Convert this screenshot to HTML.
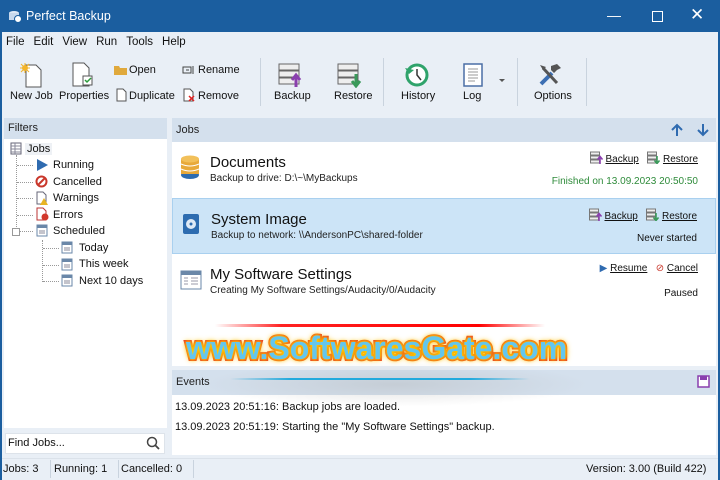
<!DOCTYPE html>
<html><head><meta charset="utf-8"><style>
*{margin:0;padding:0;box-sizing:border-box}
body{width:720px;height:480px;overflow:hidden;font-family:"Liberation Sans",sans-serif;font-size:11px;color:#111;background:#e9eff6;position:relative}
.abs{position:absolute}
#title{left:0;top:0;width:720px;height:32px;background:#1b5e9f;color:#fff;font-size:12px}
#menu{left:0;top:32px;width:720px;height:20px;background:#e9eff6}
#menu span{margin-left:6px;margin-right:3px;font-size:11.5px;line-height:20px}
.tb{text-align:center;font-size:11px}
.sep{width:1px;background:#c9d3de}
.hdr{background:#d4e0ed;font-size:11px;color:#222}
.u{text-decoration:underline}
.row{left:172px;width:544px;height:56px;background:#fff}
.row .t{position:absolute;left:38px;top:12px;font-size:15px;color:#111}
.row .s{position:absolute;left:38px;top:31px;font-size:10px;color:#222}
.row .r{position:absolute;right:18px;top:34px;font-size:10px}
.row .a{position:absolute;right:18px;top:9px;font-size:10px}
.tree div{position:absolute;font-size:11px}
.ic{display:inline-block;vertical-align:-2px}
</style></head><body>
<svg width="0" height="0" style="position:absolute"><defs>
<symbol id="bk" viewBox="0 0 13 13"><rect x="0.5" y="1" width="9" height="3" fill="#eee" stroke="#777"/><rect x="0.5" y="5" width="9" height="3" fill="#eee" stroke="#777"/><rect x="0.5" y="9" width="9" height="3" fill="#eee" stroke="#777"/><path d="M10 13V6M7.5 8.5L10 5.5l2.5 3" stroke="#8a3fae" stroke-width="1.6" fill="none"/></symbol>
<symbol id="rs" viewBox="0 0 13 13"><rect x="0.5" y="1" width="9" height="3" fill="#eee" stroke="#777"/><rect x="0.5" y="5" width="9" height="3" fill="#eee" stroke="#777"/><rect x="0.5" y="9" width="9" height="3" fill="#eee" stroke="#777"/><path d="M10 5v7M7.5 9.5l2.5 3 2.5-3" stroke="#3a9a5a" stroke-width="1.6" fill="none"/></symbol>
</defs></svg>
<div id="title" class="abs">
 <svg class="abs" style="left:8px;top:10px" width="14" height="13"><ellipse cx="6" cy="3" rx="5" ry="2" fill="#dfe9f5"/><rect x="1" y="3" width="10" height="7" fill="#c7d8ec"/><circle cx="10" cy="9" r="3.5" fill="#fff" stroke="#1b5e9f"/></svg>
 <div class="abs" style="left:26px;top:9px;font-size:12.5px">Perfect Backup</div>
 <div class="abs" style="left:607px;top:7px;font-size:14px">&#8212;</div>
 <div class="abs" style="left:652px;top:11px;width:11px;height:11px;border:1.3px solid #fff"></div>
 <div class="abs" style="left:690px;top:5px;font-size:17px">&#10005;</div>
</div>
<div id="menu" class="abs"><span>File</span><span>Edit</span><span>View</span><span>Run</span><span>Tools</span><span>Help</span></div>
<!-- toolbar -->
<svg class="abs" style="left:18px;top:62px" width="26" height="26"><path d="M8 3h10l5 5v17H8z" fill="#fff" stroke="#555"/><circle cx="7" cy="6" r="3" fill="#f3b42a"/><path d="M2 6h10M7 1v10M3 2l8 8M11 2l-8 8" stroke="#f3b42a" stroke-width="1"/></svg>
<div class="abs tb" style="left:10px;top:90px">New Job</div>
<svg class="abs" style="left:70px;top:62px" width="26" height="26"><path d="M3 1h11l5 5v18H3z" fill="#fff" stroke="#555"/><rect x="13" y="14" width="9" height="9" fill="#fff" stroke="#555"/><path d="M15 18l2 2 4-4" stroke="#2a9a3a" stroke-width="1.5" fill="none"/></svg>
<div class="abs tb" style="left:59px;top:90px">Properties</div>
<svg class="abs" style="left:114px;top:64px" width="14" height="12"><path d="M0 2h5l1 2h7v7H0z" fill="#e0a93c"/></svg>
<div class="abs" style="left:129px;top:64px">Open</div>
<svg class="abs" style="left:114px;top:88px" width="14" height="14"><path d="M3 1h6l3 3v9H3z" fill="#fff" stroke="#555"/></svg>
<div class="abs" style="left:129px;top:90px">Duplicate</div>
<svg class="abs" style="left:182px;top:65px" width="14" height="10"><rect x="1" y="2" width="8" height="6" fill="none" stroke="#444"/><path d="M4 5h3M11 1v8" stroke="#444"/></svg>
<div class="abs" style="left:198px;top:64px">Rename</div>
<svg class="abs" style="left:182px;top:88px" width="14" height="14"><path d="M2 1h6l3 3v9H2z" fill="#fff" stroke="#555"/><path d="M7 8l5 5M12 8l-5 5" stroke="#d22" stroke-width="1.5"/></svg>
<div class="abs" style="left:198px;top:90px">Remove</div>
<div class="abs sep" style="left:260px;top:58px;height:48px"></div>
<svg class="abs" style="left:277px;top:62px" width="26" height="26"><rect x="2" y="2" width="20" height="6" fill="#eee" stroke="#666"/><rect x="2" y="9" width="20" height="6" fill="#eee" stroke="#666"/><rect x="2" y="16" width="20" height="6" fill="#eee" stroke="#666"/><path d="M19 25V14M15 18l4-5 4 5" stroke="#8a3fae" stroke-width="3" fill="none"/></svg>
<div class="abs tb" style="left:274px;top:90px">Backup</div>
<svg class="abs" style="left:336px;top:62px" width="26" height="26"><rect x="2" y="2" width="20" height="6" fill="#eee" stroke="#666"/><rect x="2" y="9" width="20" height="6" fill="#eee" stroke="#666"/><rect x="2" y="16" width="20" height="6" fill="#eee" stroke="#666"/><path d="M20 12v11M16 19l4 5 4-5" stroke="#3a9a5a" stroke-width="3" fill="none"/></svg>
<div class="abs tb" style="left:334px;top:90px">Restore</div>
<div class="abs sep" style="left:383px;top:58px;height:48px"></div>
<svg class="abs" style="left:404px;top:62px" width="26" height="26"><circle cx="13" cy="13" r="10" fill="#fff" stroke="#2fa36b" stroke-width="3"/><path d="M13 7v6l4 5" stroke="#333" stroke-width="1.5" fill="none"/><path d="M1 6l4 6 5-4z" fill="#2fa36b"/></svg>
<div class="abs tb" style="left:401px;top:90px">History</div>
<svg class="abs" style="left:462px;top:62px" width="22" height="26"><rect x="2" y="2" width="18" height="22" fill="#fff" stroke="#4a6fa5" stroke-width="1.5"/><path d="M6 7h10M6 10h10M6 13h10M6 16h10M6 19h7" stroke="#999"/></svg>
<div class="abs tb" style="left:463px;top:90px">Log</div>
<div class="abs" style="left:499px;top:79px;width:0;height:0;border-left:3px solid transparent;border-right:3px solid transparent;border-top:3px solid #555"></div>
<div class="abs sep" style="left:517px;top:58px;height:48px"></div>
<svg class="abs" style="left:537px;top:62px" width="26" height="26"><path d="M4 22L15 11" stroke="#3c6fb3" stroke-width="4"/><path d="M6 6l14 15" stroke="#555" stroke-width="3"/><path d="M3 3l6 2-3 3zM14 4l6-2 4 4-4 2-3 3-3-3z" fill="#555"/></svg>
<div class="abs tb" style="left:534px;top:90px">Options</div>
<div class="abs sep" style="left:586px;top:58px;height:48px"></div>
<!-- left panel -->
<div class="abs hdr" style="left:4px;top:118px;width:163px;height:21px;padding:4px 0 0 4px">Filters</div>
<div class="abs" style="left:4px;top:139px;width:163px;height:289px;background:#fff"></div>
<div class="tree">
 <svg class="abs" style="left:10px;top:142px" width="12" height="13"><rect x="1" y="1" width="10" height="11" fill="#fff" stroke="#667"/><path d="M1 4h10M1 7h10M1 10h10M5 1v11" stroke="#889"/></svg>
 <div style="left:25px;top:143px;background:#eef1f5;padding:0 2px">Jobs</div>
 <div class="abs" style="left:16px;top:155px;width:1px;height:78px;border-left:1px dotted #999"></div>
 <div class="abs" style="left:17px;top:165px;width:16px;border-top:1px dotted #999"></div>
 <div class="abs" style="left:17px;top:182px;width:16px;border-top:1px dotted #999"></div>
 <div class="abs" style="left:17px;top:198px;width:16px;border-top:1px dotted #999"></div>
 <div class="abs" style="left:17px;top:215px;width:16px;border-top:1px dotted #999"></div>
 <div class="abs" style="left:20px;top:231px;width:13px;border-top:1px dotted #999"></div>
 <div class="abs" style="left:12px;top:228px;width:8px;height:8px;border:1px solid #999;background:#fff"></div>
 <div class="abs" style="left:42px;top:240px;width:1px;height:42px;border-left:1px dotted #999"></div>
 <div class="abs" style="left:43px;top:248px;width:16px;border-top:1px dotted #999"></div>
 <div class="abs" style="left:43px;top:265px;width:16px;border-top:1px dotted #999"></div>
 <div class="abs" style="left:43px;top:281px;width:16px;border-top:1px dotted #999"></div>
 <svg class="abs" style="left:36px;top:159px" width="12" height="12"><path d="M1 0l11 6-11 6z" fill="#2f6bb0"/></svg>
 <div style="left:53px;top:159px">Running</div>
 <svg class="abs" style="left:35px;top:175px" width="13" height="13"><circle cx="6.5" cy="6.5" r="5" fill="none" stroke="#c9372b" stroke-width="2"/><path d="M3 10l7-7" stroke="#c9372b" stroke-width="2"/></svg>
 <div style="left:53px;top:176px">Cancelled</div>
 <svg class="abs" style="left:36px;top:191px" width="13" height="14"><path d="M1 1h6l3 3v9H1z" fill="#fff" stroke="#667"/><path d="M8 7l4 7H4z" fill="#e8b423"/></svg>
 <div style="left:53px;top:192px">Warnings</div>
 <svg class="abs" style="left:36px;top:207px" width="13" height="14"><path d="M1 1h6l3 3v9H1z" fill="#fff" stroke="#b33"/><circle cx="9" cy="10" r="3.5" fill="#d2372b"/></svg>
 <div style="left:53px;top:209px">Errors</div>
 <svg class="abs" style="left:36px;top:224px" width="12" height="13"><rect x="1" y="1" width="10" height="11" fill="#fff" stroke="#6a87a8"/><rect x="1" y="1" width="10" height="3" fill="#6a87a8"/><path d="M3 7h6M3 9h6" stroke="#889"/></svg>
 <div style="left:53px;top:225px">Scheduled</div>
 <svg class="abs" style="left:61px;top:241px" width="12" height="13"><rect x="1" y="1" width="10" height="11" fill="#fff" stroke="#6a87a8"/><rect x="1" y="1" width="10" height="3" fill="#6a87a8"/><path d="M3 7h6M3 9h6" stroke="#889"/></svg>
 <div style="left:79px;top:242px">Today</div>
 <svg class="abs" style="left:61px;top:258px" width="12" height="13"><rect x="1" y="1" width="10" height="11" fill="#fff" stroke="#6a87a8"/><rect x="1" y="1" width="10" height="3" fill="#6a87a8"/><path d="M3 7h6M3 9h6" stroke="#889"/></svg>
 <div style="left:79px;top:258px">This week</div>
 <svg class="abs" style="left:61px;top:274px" width="12" height="13"><rect x="1" y="1" width="10" height="11" fill="#fff" stroke="#6a87a8"/><rect x="1" y="1" width="10" height="3" fill="#6a87a8"/><path d="M3 7h6M3 9h6" stroke="#889"/></svg>
 <div style="left:79px;top:275px">Next 10 days</div>
</div>
<div class="abs" style="left:5px;top:433px;width:160px;height:21px;background:#fff;border:1px solid #dde3ea;padding:3px 0 0 2px">Find Jobs...</div>
<svg class="abs" style="left:146px;top:436px" width="14" height="14"><circle cx="6" cy="6" r="4.5" fill="none" stroke="#444" stroke-width="1.5"/><path d="M9 9l4 4" stroke="#444" stroke-width="1.8"/></svg>
<!-- right panel -->
<div class="abs hdr" style="left:172px;top:118px;width:544px;height:24px;padding:6px 0 0 4px">Jobs</div>
<svg class="abs" style="left:670px;top:123px" width="14" height="14"><path d="M7 13V2M2 7l5-5 5 5" stroke="#2f6bb0" stroke-width="2" fill="none"/></svg>
<svg class="abs" style="left:696px;top:123px" width="14" height="14"><path d="M7 1v11M2 7l5 5 5-5" stroke="#2f6bb0" stroke-width="2" fill="none"/></svg>
<div class="abs row" style="top:142px">
 <svg class="abs" style="left:8px;top:13px" width="20" height="26"><ellipse cx="10" cy="20" rx="9" ry="4" fill="#2d6cb0"/><rect x="1" y="4" width="18" height="15" fill="#e8a93a"/><ellipse cx="10" cy="4" rx="9" ry="3.5" fill="#f2c05a"/><path d="M1 9q9 4 18 0M1 14q9 4 18 0" stroke="#fff" fill="none"/></svg>
 <div class="t">Documents</div><div class="s">Backup to drive: D:\~\MyBackups</div>
 <div class="a"><svg class="ic" width="13" height="13"><use href="#bk"/></svg> <span class="u">Backup</span> &nbsp; <svg class="ic" width="13" height="13"><use href="#rs"/></svg> <span class="u">Restore</span></div>
 <div class="r" style="color:#2e8b3a">Finished on 13.09.2023 20:50:50</div>
</div>
<div class="abs row" style="top:198px;background:#cce4f7;border:1px solid #a9d0ef">
 <svg class="abs" style="left:9px;top:14px" width="18" height="22"><rect x="1" y="1" width="16" height="20" rx="2" fill="#2d6cb0"/><circle cx="9" cy="11" r="5" fill="#dfeaf6"/><circle cx="9" cy="11" r="1.5" fill="#2d6cb0"/></svg>
 <div class="t">System Image</div><div class="s">Backup to network: \\AndersonPC\shared-folder</div>
 <div class="a"><svg class="ic" width="13" height="13"><use href="#bk"/></svg> <span class="u">Backup</span> &nbsp; <svg class="ic" width="13" height="13"><use href="#rs"/></svg> <span class="u">Restore</span></div>
 <div class="r">Never started</div>
</div>
<div class="abs row" style="top:254px">
 <svg class="abs" style="left:8px;top:16px" width="22" height="20"><rect x="1" y="1" width="20" height="18" fill="#fff" stroke="#6a87a8"/><rect x="1" y="1" width="20" height="4" fill="#6a87a8"/><path d="M4 8h4M4 11h4M4 14h4M11 8h7M11 11h7M11 14h7" stroke="#99a"/></svg>
 <div class="t">My Software Settings</div><div class="s">Creating My Software Settings/Audacity/0/Audacity</div>
 <div class="a"><span style="color:#2f6bb0">&#9654;</span> <span class="u">Resume</span> &nbsp; <span style="color:#c9372b">&#8856;</span> <span class="u">Cancel</span></div>
 <div class="r">Paused</div>
</div>
<div class="abs" style="left:172px;top:310px;width:544px;height:56px;background:#fff"></div>
<div class="abs hdr" style="left:172px;top:370px;width:544px;height:25px;padding:6px 0 0 4px">Events</div>
<svg class="abs" style="left:697px;top:375px" width="13" height="13"><rect x="1" y="1" width="11" height="11" fill="#fff" stroke="#8a3fae" stroke-width="1.5"/><rect x="3" y="1" width="7" height="4" fill="#8a3fae"/></svg>
<div class="abs" style="left:172px;top:395px;width:544px;height:60px;background:#fff"></div>
<div class="abs" style="left:175px;top:401px">13.09.2023 20:51:16: Backup jobs are loaded.</div>
<div class="abs" style="left:175px;top:421px">13.09.2023 20:51:19: Starting the "My Software Settings" backup.</div>
<!-- watermark -->
<div class="abs" style="left:200px;top:362px;width:390px;height:45px;background:radial-gradient(ellipse at center,rgba(170,170,170,0.35),rgba(170,170,170,0) 70%)"></div>
<div class="abs" style="left:215px;top:324px;width:330px;height:3px;background:linear-gradient(90deg,transparent,#f22 20%,#f00 80%,transparent)"></div>
<div class="abs" style="left:230px;top:378px;width:300px;height:2px;background:linear-gradient(90deg,transparent,#2ad 20%,#2ad 80%,transparent)"></div>
<div class="abs" style="left:186px;top:330px;font-size:32px;font-weight:bold;color:#63c6ee;-webkit-text-stroke:4px #e8342a;paint-order:stroke fill;text-shadow:0 0 3px #ffd400,0 0 5px #ffd400,0 0 7px #ffb000">www.SoftwaresGate.com</div>
<!-- status -->
<div class="abs" style="left:0;top:458px;width:720px;height:22px;background:#e9eff6;border-top:1px solid #dbe2ea"></div>
<div class="abs" style="left:3px;top:463px">Jobs: 3</div>
<div class="abs sep" style="left:50px;top:460px;height:18px"></div>
<div class="abs" style="left:54px;top:463px">Running: 1</div>
<div class="abs sep" style="left:118px;top:460px;height:18px"></div>
<div class="abs" style="left:121px;top:463px">Cancelled: 0</div>
<div class="abs sep" style="left:193px;top:460px;height:18px"></div>
<div class="abs" style="left:586px;top:463px">Version: 3.00 (Build 422)</div>
<div class="abs" style="left:0;top:32px;width:2px;height:448px;background:#1b5e9f"></div>
<div class="abs" style="left:718px;top:32px;width:2px;height:448px;background:#1b5e9f"></div>
</body></html>
